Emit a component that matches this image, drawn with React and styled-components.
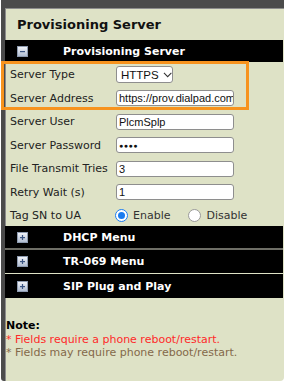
import React from 'react';
import styled, { createGlobalStyle } from 'styled-components';

const GlobalStyle = createGlobalStyle`
  html, body {
    margin: 0;
    padding: 0;
    background: #ffffff;
  }
  * {
    box-sizing: border-box;
  }
`;

const Page = styled.div`
  position: relative;
  width: 288px;
  height: 385px;
  font-family: 'DejaVu Sans', Verdana, sans-serif;
`;

const Frame = styled.div`
  margin-left: 1px;
  width: 283px;
  height: 381px;
  background: #dee2c6;
  border-top: 8px solid #4b4b4b;
  border-left: 4px solid #4b4b4b;
  border-radius: 0 0 4px 3px;
  box-shadow: inset 1px 1px 0 #8c8c8c;
`;

const Title = styled.div`
  height: 32px;
  display: flex;
  align-items: center;
  padding-left: 12px;
  font-size: 13px;
  font-weight: bold;
  color: #111;
`;

const Bar = styled.div`
  height: ${p => p.$h || 22}px;
  margin-right: 1px;
  background: #000;
  display: flex;
  align-items: center;
  gap: 35px;
  padding-left: 12px;
  color: #fff;
  font-size: 11px;
  font-weight: bold;
  border-bottom: ${p => p.$line || 'none'};
`;

const Form = styled.div`
  padding: 1px 0 0 5px;
`;

const Row = styled.div`
  display: grid;
  grid-template-columns: 106px auto;
  align-items: center;
  height: ${p => p.$h || 23.5}px;
  font-size: 11px;
  color: #222;
`;

const Field = styled.div`
  width: ${p => p.$w}px;
  height: 16px;
  background: #fff;
  border: 1px solid #8e8e8e;
  border-radius: 3px;
  display: flex;
  align-items: center;
  padding-left: 2px;
  overflow: hidden;
  white-space: nowrap;
  font-family: 'Liberation Sans', Arial, sans-serif;
  font-size: 11px;
  color: #111;
`;

const SelectBox = styled(Field)`
  height: 17px;
  padding-left: 4px;
  gap: 4px;
  font-size: 11.5px;
`;

const Dots = styled.span`
  font-size: 7px;
  letter-spacing: 0.5px;
  padding-top: 1px;
`;

const Radios = styled.div`
  display: flex;
  align-items: center;
  margin-left: -1px;
`;

const RadioCircle = styled.span`
  width: 13px;
  height: 13px;
  border-radius: 50%;
  background: #fff;
  border: 1px solid ${p => (p.$on ? '#1a7cf0' : '#9a9a9a')};
  display: flex;
  align-items: center;
  justify-content: center;
  &::after {
    content: '';
    width: 7px;
    height: 7px;
    border-radius: 50%;
    background: ${p => (p.$on ? '#1a7cf0' : 'transparent')};
  }
`;

const RadioText = styled.span`
  margin-left: 5px;
  margin-right: ${p => p.$mr || 0}px;
  color: #333;
`;

const Note = styled.div`
  margin-top: 21px;
  padding-left: 1px;
  font-size: 11px;
  line-height: 13.5px;
`;

const NoteTitle = styled.div`
  font-weight: bold;
  color: #000;
`;

const NoteLine = styled.div`
  color: ${p => p.$c};
`;

const Highlight = styled.div`
  position: absolute;
  left: 1px;
  top: 61px;
  width: 248px;
  height: 49px;
  border: 3px solid #f7931e;
  pointer-events: none;
`;

const ToggleIcon = ({ open }) => (
  <svg width="11" height="11" viewBox="0 0 11 11">
    <defs>
      <linearGradient id={open ? 'gm' : 'gp'} x1="0" y1="0" x2="0" y2="1">
        <stop offset="0" stopColor="#f4f6fb" />
        <stop offset="1" stopColor="#aebbd0" />
      </linearGradient>
    </defs>
    <rect x="0.5" y="0.5" width="10" height="10" fill={`url(#${open ? 'gm' : 'gp'})`} stroke="#8e9bb0" />
    <rect x="3" y="5" width="5" height="1.2" fill="#3b5583" />
    {!open && <rect x="4.9" y="3" width="1.2" height="5" fill="#3b5583" />}
  </svg>
);

const Chevron = () => (
  <svg width="10" height="6" viewBox="0 0 10 6">
    <path d="M1 0.8 L5 4.8 L9 0.8" fill="none" stroke="#333" strokeWidth="1.1" />
  </svg>
);

export default function App() {
  return (
    <Page>
      <GlobalStyle />
      <Frame>
        <Title>Provisioning Server</Title>
        <Bar>
          <ToggleIcon open />
          <span>Provisioning Server</span>
        </Bar>
        <Form>
          <Row>
            <span>Server Type</span>
            <SelectBox $w={57}>
              HTTPS <Chevron />
            </SelectBox>
          </Row>
          <Row>
            <span>Server Address</span>
            <Field $w={118}>https://prov.dialpad.com</Field>
          </Row>
          <Row>
            <span>Server User</span>
            <Field $w={118}>PlcmSplp</Field>
          </Row>
          <Row>
            <span>Server Password</span>
            <Field $w={118}>
              <Dots>●●●●</Dots>
            </Field>
          </Row>
          <Row>
            <span>File Transmit Tries</span>
            <Field $w={118}>3</Field>
          </Row>
          <Row>
            <span>Retry Wait (s)</span>
            <Field $w={118}>1</Field>
          </Row>
          <Row $h={22}>
            <span>Tag SN to UA</span>
            <Radios>
              <RadioCircle $on />
              <RadioText $mr={18}>Enable</RadioText>
              <RadioCircle />
              <RadioText>Disable</RadioText>
            </Radios>
          </Row>
        </Form>
        <Bar $h={24} $line="2px solid #6e6e66">
          <ToggleIcon />
          <span>DHCP Menu</span>
        </Bar>
        <Bar $h={24} $line="1px solid #dee2c6">
          <ToggleIcon />
          <span>TR-069 Menu</span>
        </Bar>
        <Bar $h={24}>
          <ToggleIcon />
          <span>SIP Plug and Play</span>
        </Bar>
        <Note>
          <NoteTitle>Note:</NoteTitle>
          <NoteLine $c="#ff2a2a">* Fields require a phone reboot/restart.</NoteLine>
          <NoteLine $c="#84694a">* Fields may require phone reboot/restart.</NoteLine>
        </Note>
      </Frame>
      <Highlight />
    </Page>
  );
}
